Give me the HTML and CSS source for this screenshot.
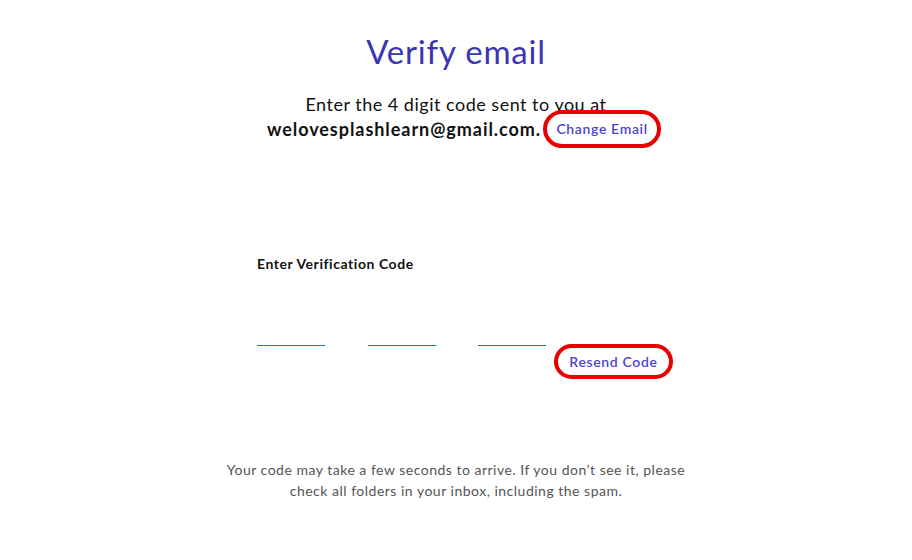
FILE: index.html
```html
<!DOCTYPE html>
<html lang="en">
<head>
<meta charset="utf-8">
<title>Verify email</title>
<link rel="stylesheet" href="styles.css">
</head>
<body>
<main class="page">
  <h1 class="title">Verify email</h1>
  <div class="intro">
    <p class="intro-line">Enter the 4 digit code sent to you at</p>
    <p class="intro-line email-line"><span class="email">welovesplashlearn@gmail.com.</span><a class="ring-link change" href="#">Change Email</a></p>
  </div>
  <section class="form">
    <label class="label">Enter Verification Code</label>
    <div class="code-row">
      <input class="digit" type="text" maxlength="1">
      <input class="digit" type="text" maxlength="1">
      <input class="digit" type="text" maxlength="1">
      <a class="ring-link resend" href="#">Resend Code</a>
    </div>
  </section>
  <p class="note">Your code may take a few seconds to arrive. If you don’t see it, please check all folders in your inbox, including the spam.</p>
</main>
</body>
</html>
```
FILE: styles.css
```css
* { box-sizing: border-box; }
html, body { margin: 0; padding: 0; background: #fff; }
body {
  font-family: "Lato", "Noto Sans", sans-serif;
  color: #111;
}
.page {
  display: flex;
  flex-direction: column;
  align-items: center;
  padding-top: 29px;
}
.title {
  margin: 0;
  font-size: 33px;
  font-weight: 400;
  line-height: 44px;
  letter-spacing: 0.8px;
  color: #3a35b5;
}
.intro {
  margin-top: 20px;
  text-align: center;
  font-size: 18px;
}
.intro-line { margin: 0; line-height: 22px; letter-spacing: 0.5px; }
.email-line {
  display: flex;
  align-items: center;
  justify-content: center;
  gap: 2px;
  margin-top: -5px;
  padding-left: 16px;
  letter-spacing: 0;
}
.email { font-weight: 700; letter-spacing: 0.95px; }
.ring-link {
  display: inline-block;
  border: 4px solid #e80000;
  border-radius: 20px;
  color: #4d43d3;
  font-size: 14px;
  font-weight: 600;
  letter-spacing: 0.65px;
  text-decoration: none;
  text-align: center;
  line-height: 27px;
  width: 118px;
  flex-shrink: 0;
}
.change { height: 38px; line-height: 30px; }
.form {
  width: 398px;
  margin-top: 106px;
  display: flex;
  flex-direction: column;
}
.label {
  font-size: 14px;
  font-weight: 700;
  line-height: 20px;
  letter-spacing: 0.55px;
}
.code-row {
  display: flex;
  align-items: flex-start;
  margin-top: 42px;
}
.digit {
  flex-shrink: 0;
  width: 68px;
  height: 30px;
  border: 0;
  border-bottom: 1px solid #1d6fc9;
  margin-right: 43px;
  padding: 0;
  font: inherit;
  outline: none;
  background: transparent;
}
.digit:nth-of-type(2) { margin-right: 42px; }
.digit:nth-of-type(3) { margin-right: 8px; }
.resend {
  margin-top: 28px;
  height: 35px;
  width: 119px;
}
.note {
  margin: 80px 0 0;
  max-width: 470px;
  text-align: center;
  font-size: 14px;
  line-height: 21px;
  letter-spacing: 0.5px;
  color: #555;
}
```
